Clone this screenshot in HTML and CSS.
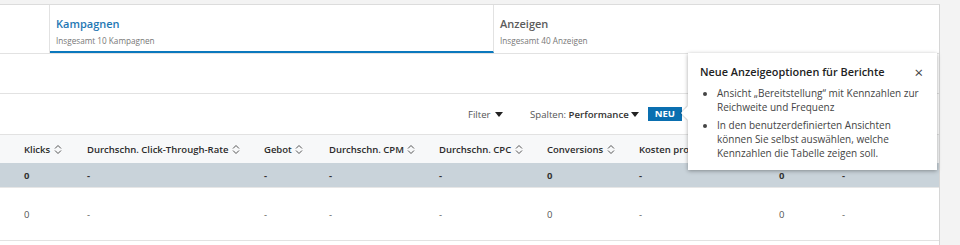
FILE: index.html
```html
<!DOCTYPE html>
<html lang="de">
<head>
    <meta charset="UTF-8">
    <title>Kampagnen</title>
    <link rel="stylesheet" href="styles.css">
</head>
<body>

    <div class="card">
        <div class="tabs">
            <div class="tab-spacer"></div>
            <div class="tab active">
                <div class="tab-title">Kampagnen</div>
                <div class="tab-sub">Insgesamt 10 Kampagnen</div>
            </div>
            <div class="tab">
                <div class="tab-title">Anzeigen</div>
                <div class="tab-sub">Insgesamt 40 Anzeigen</div>
            </div>
        </div>

        <div class="blank"></div>

        <div class="toolbar">
            <span class="filter">Filter <span class="caret"></span></span>
            <span class="columns">Spalten: <b>Performance</b><span class="caret"></span></span>
            <span class="badge">NEU</span>
        </div>

        <table class="report">
            <thead>
                <tr>
                    <th class="c1">Klicks <svg class="sort" viewBox="0 0 8 11"><path d="M1 4.5 4 1.5 7 4.5M1 6.5 4 9.5 7 6.5"/></svg></th>
                    <th class="c2">Durchschn. Click-Through-Rate <svg class="sort" viewBox="0 0 8 11"><path d="M1 4.5 4 1.5 7 4.5M1 6.5 4 9.5 7 6.5"/></svg></th>
                    <th class="c3">Gebot <svg class="sort" viewBox="0 0 8 11"><path d="M1 4.5 4 1.5 7 4.5M1 6.5 4 9.5 7 6.5"/></svg></th>
                    <th class="c4">Durchschn. CPM <svg class="sort" viewBox="0 0 8 11"><path d="M1 4.5 4 1.5 7 4.5M1 6.5 4 9.5 7 6.5"/></svg></th>
                    <th class="c5">Durchschn. CPC <svg class="sort" viewBox="0 0 8 11"><path d="M1 4.5 4 1.5 7 4.5M1 6.5 4 9.5 7 6.5"/></svg></th>
                    <th class="c6">Conversions <svg class="sort" viewBox="0 0 8 11"><path d="M1 4.5 4 1.5 7 4.5M1 6.5 4 9.5 7 6.5"/></svg></th>
                    <th class="c7">Kosten pro</th>
                    <th class="c8"></th>
                    <th class="c9"></th>
                </tr>
            </thead>
            <tbody>
                <tr class="total">
                    <td>0</td><td>-</td><td>-</td><td>-</td><td>-</td><td>0</td><td>-</td><td>0</td><td>-</td>
                </tr>
                <tr>
                    <td>0</td><td>-</td><td>-</td><td>-</td><td>-</td><td>0</td><td>-</td><td>0</td><td>-</td>
                </tr>
            </tbody>
        </table>
    </div>

    <div class="popover">
        <div class="pop-head">
            <span>Neue Anzeigeoptionen für Berichte</span>
            <span class="close">&times;</span>
        </div>
        <ul>
            <li>Ansicht „Bereitstellung“ mit Kennzahlen zur Reichweite und Frequenz</li>
            <li>In den benutzerdefinierten Ansichten können Sie selbst auswählen, welche Kennzahlen die Tabelle zeigen soll.</li>
        </ul>
    </div>

</body>
</html>
```

FILE: styles.css
```css
body {
    font-family: 'Open Sans', 'Noto Sans', sans-serif;
    background-color: #f3f3f3;
    margin: 0;
    padding: 4px 0 0;
    color: #333;
}

.card {
    width: 939px;
    height: 241px;
    background-color: #fff;
    border-top: 1px solid #dcdcdc;
    border-right: 1px solid #d6d6d6;
}

.tabs {
    display: flex;
    height: 48px;
    border-bottom: 1px solid #e2e2e2;
}

.tab-spacer {
    width: 49px;
    border-right: 1px solid #e2e2e2;
}

.tab {
    flex: 1;
    padding: 10px 0 0 6px;
}

.tab.active {
    flex: 0 0 437px;
    border-bottom: 2px solid #0a78bd;
    border-right: 1px solid #e2e2e2;
}

.tab-title {
    font-size: 11px;
    font-weight: 600;
    color: #5c5c5c;
    line-height: 17px;
}

.tab.active .tab-title {
    color: #1f78b4;
}

.tab-sub {
    font-size: 8.2px;
    color: #777;
    margin-top: 3px;
}

.blank {
    height: 39px;
    border-bottom: 1px solid #e2e2e2;
}

.toolbar {
    height: 40px;
    display: flex;
    align-items: center;
    font-size: 9.6px;
    color: #555;
    padding-left: 468px;
    border-bottom: 1px solid #e2e2e2;
}

.toolbar b {
    color: #333;
    font-weight: 600;
}

.filter {
    margin-right: 27px;
}

.caret {
    display: inline-block;
    width: 0;
    height: 0;
    border-left: 4px solid transparent;
    border-right: 4px solid transparent;
    border-top: 5px solid #222;
    margin-left: 2px;
    vertical-align: 1px;
}

.columns {
    margin-right: 9px;
}

.badge {
    background-color: #0a6fb0;
    color: #fff;
    font-weight: 700;
    font-size: 9.5px;
    padding: 0 7px;
    line-height: 14px;
}

.report {
    border-collapse: collapse;
    table-layout: fixed;
    width: 939px;
    font-size: 9.5px;
}

.report th {
    background-color: #f7f8f9;
    height: 28px;
    text-align: left;
    font-weight: 600;
    color: #2b2b2b;
    padding: 0;
    white-space: nowrap;
    overflow: hidden;
}

.report td {
    padding: 0;
    color: #555;
}

.report th:first-child,
.report td:first-child {
    padding-left: 24px;
}

.report tr.total td {
    background-color: #c9d3da;
    height: 24px;
    font-weight: 700;
    color: #333;
    border-bottom: 1px solid #e6e6e6;
}

.report tbody tr:last-child td {
    height: 52px;
    border-bottom: 1px solid #e2e2e2;
}

.sort {
    width: 8px;
    height: 11px;
    margin-left: 1px;
    vertical-align: -2px;
    fill: none;
    stroke: #555;
    stroke-width: 1;
}

.c1 { width: 63px; }
.c2 { width: 177px; }
.c3 { width: 65px; }
.c4 { width: 110px; }
.c5 { width: 108px; }
.c6 { width: 92px; }
.c7 { width: 140px; }
.c8 { width: 63px; }
.c9 { width: auto; }

.popover {
    position: absolute;
    left: 688px;
    top: 53px;
    width: 249px;
    height: 117px;
    box-sizing: border-box;
    background-color: #fff;
    box-shadow: 0 1px 4px rgba(0, 0, 0, 0.35);
    padding: 11px 12px 0 12px;
}

.popover::before {
    content: '';
    position: absolute;
    left: -5px;
    top: 55px;
    width: 10px;
    height: 10px;
    background-color: #fff;
    transform: rotate(45deg);
    box-shadow: -1px 1px 1px rgba(0, 0, 0, 0.15);
}

.pop-head {
    display: flex;
    justify-content: space-between;
    font-size: 10.9px;
    font-weight: 600;
    color: #222;
    line-height: 16px;
}

.close {
    font-weight: 400;
    font-size: 15px;
    color: #444;
    margin-right: 2px;
}

.popover ul {
    margin: 6px 0 0;
    padding: 0 3px 0 17px;
    font-size: 10px;
    line-height: 14px;
    color: #444;
}

.popover li {
    margin-bottom: 4px;
}
```
